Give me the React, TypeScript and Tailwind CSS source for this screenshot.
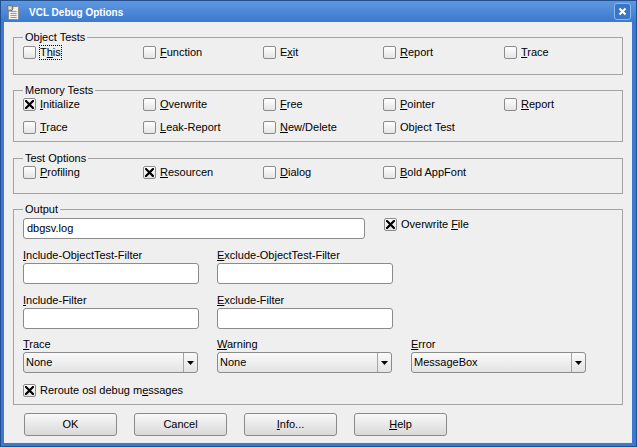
import React from "react";

function Mn({ text, u }: { text: string; u?: number }) {
  if (u === undefined) return <>{text}</>;
  return (
    <>
      {text.slice(0, u)}
      <u>{text[u]}</u>
      {text.slice(u + 1)}
    </>
  );
}

function Check({
  label,
  u,
  checked,
  focus,
  className,
}: {
  label: string;
  u?: number;
  checked?: boolean;
  focus?: boolean;
  className?: string;
}) {
  return (
    <div className={`flex items-center ${className ?? ""}`}>
      <span className="w-[13px] h-[13px] shrink-0 rounded-[2px] border border-[#8b8b8b] bg-linear-to-b from-white to-[#e4e4e4] flex items-center justify-center">
        {checked && (
          <svg width="9" height="9" viewBox="0 0 9 9">
            <path d="M1 1 L8 8 M8 1 L1 8" stroke="#000" strokeWidth="2.2" strokeLinecap="square" />
          </svg>
        )}
      </span>
      <span
        className={`ml-[4px] leading-[13px] whitespace-nowrap ${
          focus ? "outline outline-1 outline-dotted outline-black" : ""
        }`}
      >
        <Mn text={label} u={u} />
      </span>
    </div>
  );
}

function Group({
  title,
  className,
  children,
}: {
  title: string;
  className?: string;
  children: React.ReactNode;
}) {
  return (
    <fieldset className={`border border-[#a3a3a3] ${className ?? ""}`}>
      <legend className="ml-[9px] px-[2px] leading-[13px]">{title}</legend>
      {children}
    </fieldset>
  );
}

function Field({ label, u }: { label: string; u: number }) {
  return (
    <div className="w-[176px]">
      <div className="h-[13px] leading-[13px]">
        <Mn text={label} u={u} />
      </div>
      <div className="mt-[1px] h-[21px] rounded-[3px] border border-[#8b8b8b] bg-white" />
    </div>
  );
}

function Select({ label, u, value }: { label: string; u: number; value: string }) {
  return (
    <div className="w-[175px]">
      <div className="h-[13px] leading-[13px]">
        <Mn text={label} u={u} />
      </div>
      <div className="mt-[1px] h-[21px] flex rounded-[3px] border border-[#8b8b8b] bg-linear-to-b from-[#fafafa] to-[#e3e3e3]">
        <span className="flex-1 pl-[2px] leading-[19px]">{value}</span>
        <span className="w-[14px] border-l border-[#a5a5a5] flex items-center justify-center">
          <svg width="7" height="4" viewBox="0 0 7 4">
            <path d="M0 0 H7 L3.5 4 Z" fill="#000" />
          </svg>
        </span>
      </div>
    </div>
  );
}

function Btn({ children }: { children: React.ReactNode }) {
  return (
    <button className="w-[93px] h-[23px] rounded-[3px] border border-[#8a8a8a] bg-linear-to-b from-[#f8f8f8] to-[#d9d9d9] text-[11px] leading-[21px]">
      {children}
    </button>
  );
}

export default function App() {
  return (
    <div className="w-[637px] h-[447px] flex flex-col border border-[#22508f] bg-[#3a79cf] font-['Liberation_Sans',Arial,sans-serif] text-[11px] text-black">
      {/* title bar */}
      <div className="h-[21px] shrink-0 flex items-center bg-linear-to-b from-[#5f98e0] to-[#3a79cf]">
        <svg className="ml-[4px]" width="16" height="16" viewBox="0 0 16 16">
          <rect x="3.5" y="2.5" width="10" height="13" rx="1" fill="#f0f0f0" stroke="#8d8d8d" />
          <path d="M5.5 7.5 H11.5 M5.5 9.5 H11.5 M5.5 11.5 H11.5 M5.5 13.5 H11.5" stroke="#9a9a9a" />
          <circle cx="5" cy="4" r="3" fill="#b8b8b8" stroke="#6e6e6e" />
          <circle cx="5" cy="4" r="1" fill="#f0f0f0" />
        </svg>
        <span className="ml-[8px] pt-[2px] text-[10px] font-bold text-white">VCL Debug Options</span>
        <span className="ml-auto mr-[5px] w-[17px] h-[17px] rounded-[3px] border border-[#8cb8ee] bg-[#3b75c6] flex items-center justify-center">
          <svg width="9" height="9" viewBox="0 0 9 9">
            <path d="M1.5 1.5 L7.5 7.5 M7.5 1.5 L1.5 7.5" stroke="#fff" strokeWidth="2" />
          </svg>
        </span>
      </div>

      {/* body */}
      <div className="flex-1 ml-[3px] mr-[4px] mb-[3px] bg-[#efefef] px-[9px] pt-[9px] flex flex-col">
        <Group title="Object Tests">
          <div className="flex items-center h-[16px] pl-[9px] mb-[14px]">
            <Check className="w-[120px]" label="This" u={1} focus />
            <Check className="w-[120px]" label="Function" u={0} />
            <Check className="w-[120px]" label="Exit" u={1} />
            <Check className="w-[121px]" label="Report" u={0} />
            <Check label="Trace" u={0} />
          </div>
        </Group>

        <Group title="Memory Tests" className="mt-[9px]">
          <div className="pl-[9px] pb-[7px]">
            <div className="flex items-center h-[14px]">
              <Check className="w-[120px]" label="Initialize" u={0} checked />
              <Check className="w-[120px]" label="Overwrite" u={0} />
              <Check className="w-[120px]" label="Free" u={0} />
              <Check className="w-[121px]" label="Pointer" u={0} />
              <Check label="Report" u={0} />
            </div>
            <div className="flex items-center h-[14px] mt-[9px]">
              <Check className="w-[120px]" label="Trace" u={0} />
              <Check className="w-[120px]" label="Leak-Report" u={0} />
              <Check className="w-[120px]" label="New/Delete" u={0} />
              <Check label="Object Test" />
            </div>
          </div>
        </Group>

        <Group title="Test Options" className="mt-[10px]">
          <div className="flex items-center h-[14px] pl-[9px] mb-[14px]">
            <Check className="w-[120px]" label="Profiling" u={0} />
            <Check className="w-[120px]" label="Resourcen" u={0} checked />
            <Check className="w-[120px]" label="Dialog" u={0} />
            <Check label="Bold AppFont" u={0} />
          </div>
        </Group>

        <Group title="Output" className="mt-[9px]">
          <div className="px-[9px] pt-[2px] pb-[7px]">
            <div className="flex items-start">
              <div className="w-[342px] h-[21px] rounded-[3px] border border-[#8b8b8b] bg-white pl-[3px] leading-[19px]">
                dbgsv.log
              </div>
              <Check className="ml-[19px]" label="Overwrite File" u={10} checked />
            </div>
            <div className="flex gap-[18px] mt-[10px]">
              <Field label="Include-ObjectTest-Filter" u={0} />
              <Field label="Exclude-ObjectTest-Filter" u={0} />
            </div>
            <div className="flex gap-[18px] mt-[10px]">
              <Field label="Include-Filter" u={0} />
              <Field label="Exclude-Filter" u={0} />
            </div>
            <div className="flex gap-[19px] mt-[9px]">
              <Select label="Trace" u={0} value="None" />
              <Select label="Warning" u={0} value="None" />
              <Select label="Error" u={0} value="MessageBox" />
            </div>
            <div className="flex items-center h-[14px] mt-[10px]">
              <Check label="Reroute osl debug messages" u={19} checked />
            </div>
          </div>
        </Group>

        <div className="flex gap-[17px] mt-[8px] ml-[11px]">
          <Btn>OK</Btn>
          <Btn>Cancel</Btn>
          <Btn>
            <Mn text="Info..." u={0} />
          </Btn>
          <Btn>
            <Mn text="Help" u={0} />
          </Btn>
        </div>
      </div>
    </div>
  );
}
